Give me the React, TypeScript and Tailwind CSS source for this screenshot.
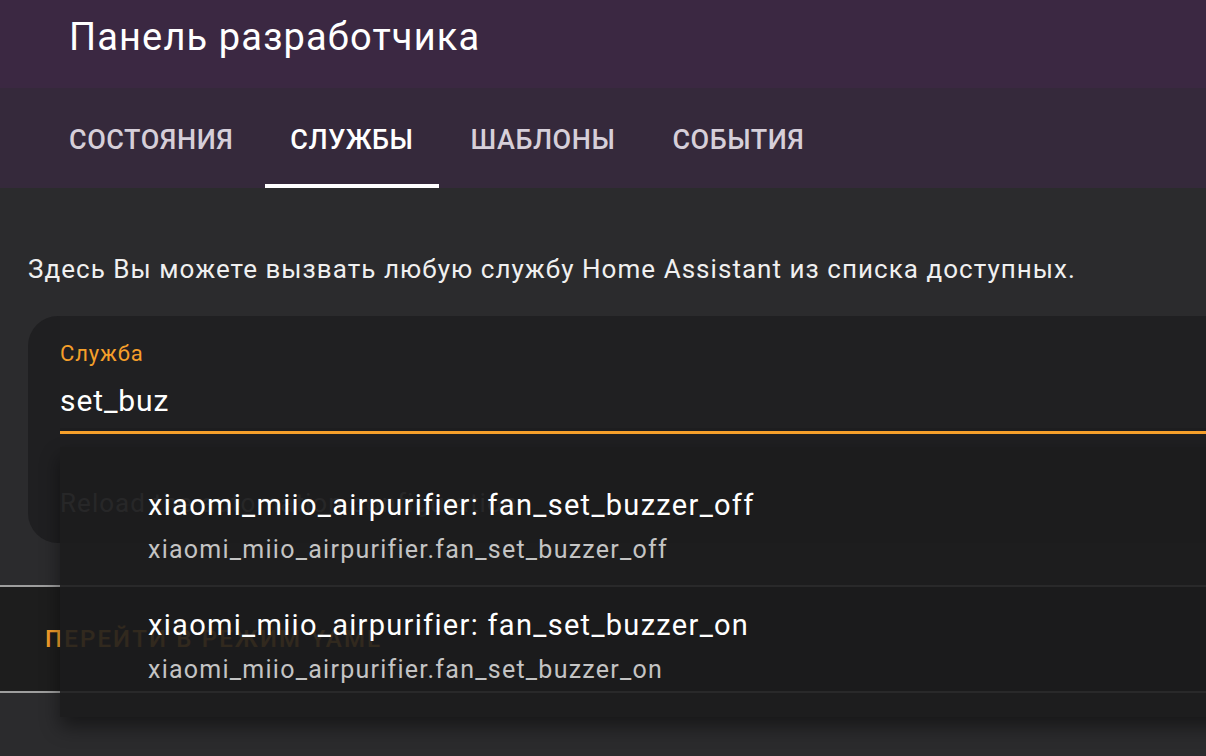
import React from "react";

const font = { fontFamily: "Roboto, 'Noto Sans', sans-serif" };

export default function App() {
  const tabs = ["Состояния", "Службы", "Шаблоны", "События"];
  return (
    <div
      className="relative w-[1206px] h-[756px] overflow-hidden bg-[#2b2b2d] text-white"
      style={font}
    >
      {/* Header */}
      <div className="h-[88px] bg-[#3b2842] pl-[69px] pt-[12px]">
        <div className="text-[38px] leading-[50px] tracking-[0.03em] text-white">
          Панель разработчика
        </div>
      </div>
      {/* Tabs */}
      <div className="h-[100px] bg-[#35293b] flex items-stretch pl-[44px] gap-[7px]">
        {tabs.map((t, i) => (
          <div
            key={t}
            className={
              "relative flex items-center px-[25px] text-[27px] font-medium uppercase tracking-[0.02em] " +
              (i === 1 ? "text-white" : "text-[#d6cfd9]")
            }
          >
            <span className="mt-[4px]">{t}</span>
            {i === 1 && (
              <div className="absolute left-0 right-0 bottom-0 h-[4px] bg-white" />
            )}
          </div>
        ))}
      </div>

      {/* Body */}
      <div className="pt-[63px] pl-[28px]">
        <div className="text-[26px] leading-[36px] tracking-[0.04em] text-[#f0f0f0]">
          Здесь Вы можете вызвать любую службу Home Assistant из списка доступных.
        </div>
      </div>

      {/* Card */}
      <div className="mt-[29px] ml-[28px] w-[1260px] h-[227px] rounded-[30px] bg-[#1f1f21] pl-[32px]">
        <div className="pt-[24px] h-[112px] bg-[#202022] flex flex-col">
          <div className="text-[22px] leading-[28px] tracking-[0.04em] text-[#f59f2a]">
            Служба
          </div>
          <div className="mt-[13px] text-[30px] leading-[40px] tracking-[0.03em] text-white">
            set_buz
          </div>
        </div>
        <div className="h-[3px] bg-[#1d1d1f]" />
        <div className="h-[3px] bg-[#f59f2a]" />
        <div className="mt-[52px] text-[26px] leading-[34px] tracking-[0.04em] text-[#8e8e90]">
          Reload the automation configuration
        </div>
      </div>

      {/* Bottom bar */}
      <div className="mt-[42px] h-[108px] border-y-2 border-[#9e9e9e] bg-[#1d1d1d] flex items-center pl-[45px]">
        <span className="text-[24px] font-medium uppercase tracking-[0.09em] text-[#f59f2a]">
          Перейти в режим YAML
        </span>
      </div>

      {/* Dropdown overlay */}
      <div className="absolute left-[60px] top-[447px] w-[1200px] h-[270px] bg-[#1c1c1d]/90 pt-[18px] shadow-[0_10px_18px_rgba(0,0,0,0.45)]">
        {[
          ["xiaomi_miio_airpurifier: fan_set_buzzer_off", "xiaomi_miio_airpurifier.fan_set_buzzer_off"],
          ["xiaomi_miio_airpurifier: fan_set_buzzer_on", "xiaomi_miio_airpurifier.fan_set_buzzer_on"],
        ].map(([a, b]) => (
          <div key={a} className="h-[120px] flex flex-col justify-center pl-[88px]">
            <div className="text-[29px] leading-[38px] tracking-[0.045em] text-white">{a}</div>
            <div className="mt-[11px] text-[25px] leading-[30px] tracking-[0.05em] text-[#c4c4c4]">
              {b}
            </div>
          </div>
        ))}
      </div>
    </div>
  );
}
